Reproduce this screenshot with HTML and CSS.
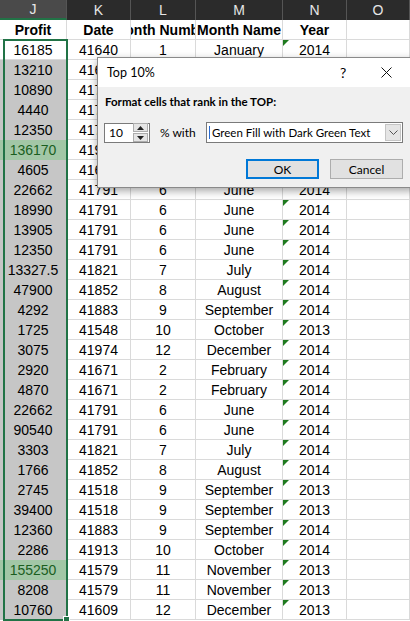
FILE: index.html
```html
<!DOCTYPE html>
<html>
<head>
<meta charset="utf-8">
<link rel="stylesheet" href="styles.css">
</head>
<body>
<div class="sheet">
  <div class="grid">
    <div class="hd sel-hd">J</div><div class="hd">K</div><div class="hd">L</div><div class="hd">M</div><div class="hd">N</div><div class="hd">O</div>
    <div class="c b">Profit</div><div class="c b">Date</div><div class="c b"><span>Month Number</span></div><div class="c b">Month Name</div><div class="c b">Year</div><div class="c"></div>

    <div class="c">16185</div><div class="c">41640</div><div class="c">1</div><div class="c">January</div><div class="c tri">2014</div><div class="c"></div>
    <div class="c g">13210</div><div class="c">41671</div><div class="c">2</div><div class="c">February</div><div class="c tri">2014</div><div class="c"></div>
    <div class="c g">10890</div><div class="c">41730</div><div class="c">4</div><div class="c">April</div><div class="c tri">2014</div><div class="c"></div>
    <div class="c g">4440</div><div class="c">41760</div><div class="c">5</div><div class="c">May</div><div class="c tri">2014</div><div class="c"></div>
    <div class="c g">12350</div><div class="c">41791</div><div class="c">6</div><div class="c">June</div><div class="c tri">2014</div><div class="c"></div>
    <div class="c top">136170</div><div class="c">41913</div><div class="c">10</div><div class="c">October</div><div class="c tri">2014</div><div class="c"></div>
    <div class="c g">4605</div><div class="c">41671</div><div class="c">2</div><div class="c">February</div><div class="c tri">2014</div><div class="c"></div>
    <div class="c g">22662</div><div class="c">41791</div><div class="c">6</div><div class="c">June</div><div class="c tri">2014</div><div class="c"></div>
    <div class="c g">18990</div><div class="c">41791</div><div class="c">6</div><div class="c">June</div><div class="c tri">2014</div><div class="c"></div>
    <div class="c g">13905</div><div class="c">41791</div><div class="c">6</div><div class="c">June</div><div class="c tri">2014</div><div class="c"></div>
    <div class="c g">12350</div><div class="c">41791</div><div class="c">6</div><div class="c">June</div><div class="c tri">2014</div><div class="c"></div>
    <div class="c g">13327.5</div><div class="c">41821</div><div class="c">7</div><div class="c">July</div><div class="c tri">2014</div><div class="c"></div>
    <div class="c g">47900</div><div class="c">41852</div><div class="c">8</div><div class="c">August</div><div class="c tri">2014</div><div class="c"></div>
    <div class="c g">4292</div><div class="c">41883</div><div class="c">9</div><div class="c">September</div><div class="c tri">2014</div><div class="c"></div>
    <div class="c g">1725</div><div class="c">41548</div><div class="c">10</div><div class="c">October</div><div class="c tri">2013</div><div class="c"></div>
    <div class="c g">3075</div><div class="c">41974</div><div class="c">12</div><div class="c">December</div><div class="c tri">2014</div><div class="c"></div>
    <div class="c g">2920</div><div class="c">41671</div><div class="c">2</div><div class="c">February</div><div class="c tri">2014</div><div class="c"></div>
    <div class="c g">4870</div><div class="c">41671</div><div class="c">2</div><div class="c">February</div><div class="c tri">2014</div><div class="c"></div>
    <div class="c g">22662</div><div class="c">41791</div><div class="c">6</div><div class="c">June</div><div class="c tri">2014</div><div class="c"></div>
    <div class="c g">90540</div><div class="c">41791</div><div class="c">6</div><div class="c">June</div><div class="c tri">2014</div><div class="c"></div>
    <div class="c g">3303</div><div class="c">41821</div><div class="c">7</div><div class="c">July</div><div class="c tri">2014</div><div class="c"></div>
    <div class="c g">1766</div><div class="c">41852</div><div class="c">8</div><div class="c">August</div><div class="c tri">2014</div><div class="c"></div>
    <div class="c g">2745</div><div class="c">41518</div><div class="c">9</div><div class="c">September</div><div class="c tri">2013</div><div class="c"></div>
    <div class="c g">39400</div><div class="c">41518</div><div class="c">9</div><div class="c">September</div><div class="c tri">2013</div><div class="c"></div>
    <div class="c g">12360</div><div class="c">41883</div><div class="c">9</div><div class="c">September</div><div class="c tri">2014</div><div class="c"></div>
    <div class="c g">2286</div><div class="c">41913</div><div class="c">10</div><div class="c">October</div><div class="c tri">2014</div><div class="c"></div>
    <div class="c top">155250</div><div class="c">41579</div><div class="c">11</div><div class="c">November</div><div class="c tri">2013</div><div class="c"></div>
    <div class="c g">8208</div><div class="c">41579</div><div class="c">11</div><div class="c">November</div><div class="c tri">2013</div><div class="c"></div>
    <div class="c g">10760</div><div class="c">41609</div><div class="c">12</div><div class="c">December</div><div class="c tri">2013</div><div class="c"></div>
  </div>

  <div class="selection"><span class="handle"></span></div>

  <div class="dialog">
    <div class="titlebar">
      <span class="title">Top 10%</span>
      <span class="help">?</span>
      <svg class="close" width="11" height="11" viewBox="0 0 11 11"><path d="M0.5 0.5 L10.5 10.5 M10.5 0.5 L0.5 10.5" stroke="#111" stroke-width="1" fill="none"/></svg>
    </div>
    <div class="dbody">
      <div class="label">Format cells that rank in the TOP:</div>
      <div class="inrow">
        <div class="spin">
          <span class="val">10</span>
          <div class="spinbtns">
            <span class="sb"><svg width="7" height="4" viewBox="0 0 7 4"><path d="M0 4 L3.5 0 L7 4Z" fill="#222"/></svg></span>
            <span class="sb"><svg width="7" height="4" viewBox="0 0 7 4"><path d="M0 0 L3.5 4 L7 0Z" fill="#222"/></svg></span>
          </div>
        </div>
        <span class="pct">% with</span>
        <div class="combo">
          <span class="caret"></span>
          <span class="ctext">Green Fill with Dark Green Text</span>
          <span class="arrow"><svg width="9" height="5" viewBox="0 0 9 5"><path d="M0.5 0.5 L4.5 4.5 L8.5 0.5" stroke="#555" stroke-width="1" fill="none"/></svg></span>
        </div>
      </div>
      <div class="btnrow">
        <div class="btn ok">OK</div>
        <div class="btn">Cancel</div>
      </div>
    </div>
  </div>
</div>
</body>
</html>
```

FILE: styles.css
```css
html, body {
  margin: 0;
  padding: 0;
  background: #ffffff;
}
.sheet {
  position: relative;
  width: 410px;
  height: 621px;
  overflow: hidden;
  background: #ffffff;
}
.grid {
  display: grid;
  grid-template-columns: 67px 64px 65px 87px 64px 63px;
  grid-auto-rows: 20px;
  font-family: "Liberation Sans", Arial, sans-serif;
  font-size: 14px;
  color: #000;
}
.hd {
  background: #2b2b2b;
  color: #e6e6e6;
  border-right: 1px solid #555;
  box-sizing: border-box;
  display: flex;
  align-items: center;
  justify-content: center;
  font-size: 14px;
}
.sel-hd {
  background: #4a4a4a;
  border-bottom: 2px solid #217346;
}
.c {
  position: relative;
  box-sizing: border-box;
  border-right: 1px solid #dadada;
  border-bottom: 1px solid #dadada;
  display: flex;
  align-items: center;
  justify-content: center;
  white-space: nowrap;
  overflow: hidden;
  padding-top: 1px;
}
.c span {
  flex: none;
}
.b {
  font-weight: bold;
}
.g {
  background: #c6c6c6;
  border-bottom-color: #c6c6c6;
}
.top {
  background: #a2c7a6;
  color: #1a5e1f;
  border-bottom-color: #a2c7a6;
}
.tri::before {
  content: "";
  position: absolute;
  left: 0;
  top: 0;
  border-top: 6px solid #1f7a1f;
  border-right: 6px solid transparent;
}
.selection {
  position: absolute;
  left: 3px;
  top: 39px;
  width: 65px;
  height: 582px;
  box-sizing: border-box;
  border: 2px solid #217346;
}
.handle {
  position: absolute;
  right: -4px;
  bottom: -4px;
  width: 5px;
  height: 5px;
  background: #217346;
  border: 1px solid #fff;
}
.dialog {
  position: absolute;
  left: 97px;
  top: 57px;
  width: 318px;
  box-sizing: border-box;
  border: 1px solid #8a8a8a;
  background: #f0f0f0;
  box-shadow: 0 3px 8px rgba(0, 0, 0, 0.35);
  font-family: Lato, "Noto Sans", sans-serif;
  font-size: 11.5px;
  color: #000;
}
.titlebar {
  height: 29px;
  background: #ffffff;
  display: flex;
  align-items: center;
  padding-left: 9px;
  font-size: 12.5px;
}
.title {
  flex: 1;
}
.help {
  width: 8px;
  margin-right: 33px;
  font-size: 14px;
}
.close {
  margin-right: 22px;
}
.dbody {
  padding: 7px 0 8px 0;
}
.label {
  font-weight: bold;
  padding-left: 7px;
  line-height: 16px;
}
.inrow {
  display: flex;
  align-items: center;
  margin-top: 12px;
  height: 21px;
}
.spin {
  margin-left: 6px;
  width: 46px;
  height: 20px;
  box-sizing: border-box;
  border: 1px solid #7a7a7a;
  background: #fff;
  display: flex;
  align-items: center;
}
.val {
  flex: 1;
  padding-left: 4px;
  color: #000;
  font-size: 12px;
}
.spinbtns {
  display: flex;
  flex-direction: column;
  gap: 1px;
  margin-right: 1px;
}
.sb {
  width: 13px;
  height: 7px;
  background: #e5e5e5;
  border: 1px solid #adadad;
  display: flex;
  align-items: center;
  justify-content: center;
}
.pct {
  width: 46px;
  margin-left: 10px;
  font-size: 12px;
}
.combo {
  width: 197px;
  height: 21px;
  box-sizing: border-box;
  border: 1px solid #7a7a7a;
  background: #fff;
  display: flex;
  align-items: center;
}
.caret {
  width: 1px;
  height: 13px;
  background: #2a6bd0;
  margin-left: 2px;
}
.ctext {
  flex: 1;
  padding-left: 2px;
  white-space: nowrap;
}
.arrow {
  width: 16px;
  height: 17px;
  box-sizing: border-box;
  margin-right: 1px;
  background: #e5e5e5;
  border: 1px solid #c5c5c5;
  display: flex;
  align-items: center;
  justify-content: center;
}
.btnrow {
  display: flex;
  gap: 11px;
  margin-top: 16px;
  padding-left: 148px;
}
.btn {
  width: 73px;
  height: 20px;
  box-sizing: border-box;
  background: #e1e1e1;
  border: 1px solid #adadad;
  display: flex;
  align-items: center;
  justify-content: center;
  font-size: 12px;
}
.btn.ok {
  border: 2px solid #0078d7;
}
```
